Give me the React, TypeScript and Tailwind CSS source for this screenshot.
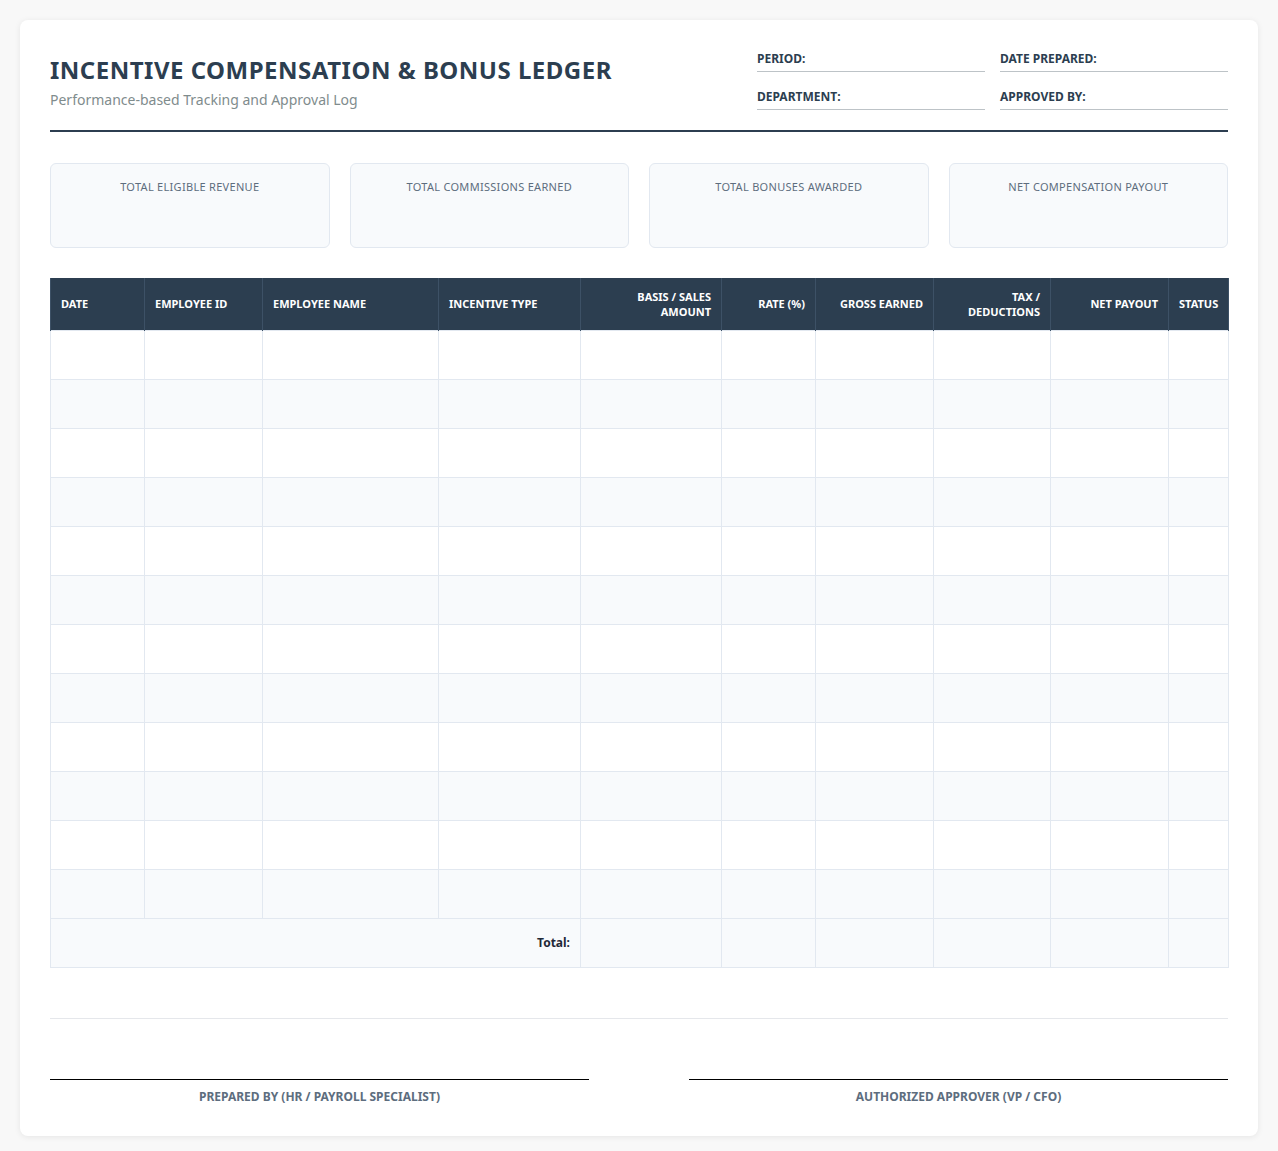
const cols = [
  { label: "DATE", w: 94, align: "text-left" },
  { label: "EMPLOYEE ID", w: 118, align: "text-left" },
  { label: "EMPLOYEE NAME", w: 176, align: "text-left" },
  { label: "INCENTIVE TYPE", w: 142, align: "text-left" },
  { label: "BASIS / SALES AMOUNT", w: 141, align: "text-right" },
  { label: "RATE (%)", w: 94, align: "text-right" },
  { label: "GROSS EARNED", w: 118, align: "text-right" },
  { label: "TAX / DEDUCTIONS", w: 117, align: "text-right" },
  { label: "NET PAYOUT", w: 118, align: "text-right" },
  { label: "STATUS", w: 60, align: "text-left" },
];

const cards = [
  "TOTAL ELIGIBLE REVENUE",
  "TOTAL COMMISSIONS EARNED",
  "TOTAL BONUSES AWARDED",
  "NET COMPENSATION PAYOUT",
];

const rows = Array.from({ length: 12 }, (_, i) => i);

export default function App() {
  return (
    <div className="min-h-[1151px] bg-[#f8f8f8] p-5 font-['Open_Sans',sans-serif]">
      <div className="rounded-lg bg-white px-[30px] pt-[30px] pb-[30px] shadow-[0_1px_6px_rgba(0,0,0,0.08)]">
        {/* header */}
        <div className="flex items-start justify-between border-b-2 border-[#2c3e50] pb-5">
          <div className="pt-[3px]">
            <h1 className="text-[24px] font-bold leading-[34px] tracking-[0.5px] text-[#2c3e50]">
              INCENTIVE COMPENSATION &amp; BONUS LEDGER
            </h1>
            <p className="mt-0.5 text-[14px] text-[#7f8c8d]">Performance-based Tracking and Approval Log</p>
          </div>
          <div className="grid w-[471px] grid-cols-2 gap-x-[15px] gap-y-[16px]">
            {["PERIOD:", "DATE PREPARED:", "DEPARTMENT:", "APPROVED BY:"].map((l) => (
              <div key={l} className="border-b border-[#bdc3c7] pb-[3px] text-[12px] font-bold leading-[18px] text-[#2c3e50]">
                {l}
              </div>
            ))}
          </div>
        </div>

        {/* summary */}
        <div className="mt-[31px] grid grid-cols-4 gap-5">
          {cards.map((c) => (
            <div key={c} className="h-[85px] rounded-md border border-[#e2e8f0] bg-[#f8fafc] pt-[15px] text-center text-[11px] tracking-[0.3px] text-[#5d6d7e]">
              {c}
            </div>
          ))}
        </div>

        {/* table */}
        <table className="mt-[30px] w-full table-fixed border-collapse">
          <colgroup>
            {cols.map((c) => (
              <col key={c.label} style={{ width: c.w }} />
            ))}
          </colgroup>
          <thead>
            <tr className="h-[52px] bg-[#2c3e50]">
              {cols.map((c) => (
                <th key={c.label} className={`border-x border-[#3d5166] px-[10px] text-[11px] font-bold leading-[15px] text-white ${c.align}`}>
                  {c.label}
                </th>
              ))}
            </tr>
          </thead>
          <tbody>
            {rows.map((r) => (
              <tr key={r} className={`h-[49px] ${r % 2 === 1 ? "bg-[#f8fafc]" : "bg-white"}`}>
                {cols.map((c) => (
                  <td key={c.label} className="border border-[#e2e8f0]"></td>
                ))}
              </tr>
            ))}
            <tr className="h-[49px] bg-[#f8fafc]">
              <td colSpan={4} className="border border-[#e2e8f0] px-[10px] text-right text-[12px] font-bold text-[#1f2937]">
                Total:
              </td>
              {cols.slice(4).map((c) => (
                <td key={c.label} className="border border-[#e2e8f0]"></td>
              ))}
            </tr>
          </tbody>
        </table>

        {/* signatures */}
        <div className="mt-[50px] grid grid-cols-2 gap-[100px] border-t border-[#e5e7eb] pt-[60px]">
          {["PREPARED BY (HR / PAYROLL SPECIALIST)", "AUTHORIZED APPROVER (VP / CFO)"].map((s) => (
            <div key={s} className="border-t border-black pt-[8px] text-center text-[12px] font-bold text-[#5d6d7e]">
              {s}
            </div>
          ))}
        </div>
      </div>
    </div>
  );
}
